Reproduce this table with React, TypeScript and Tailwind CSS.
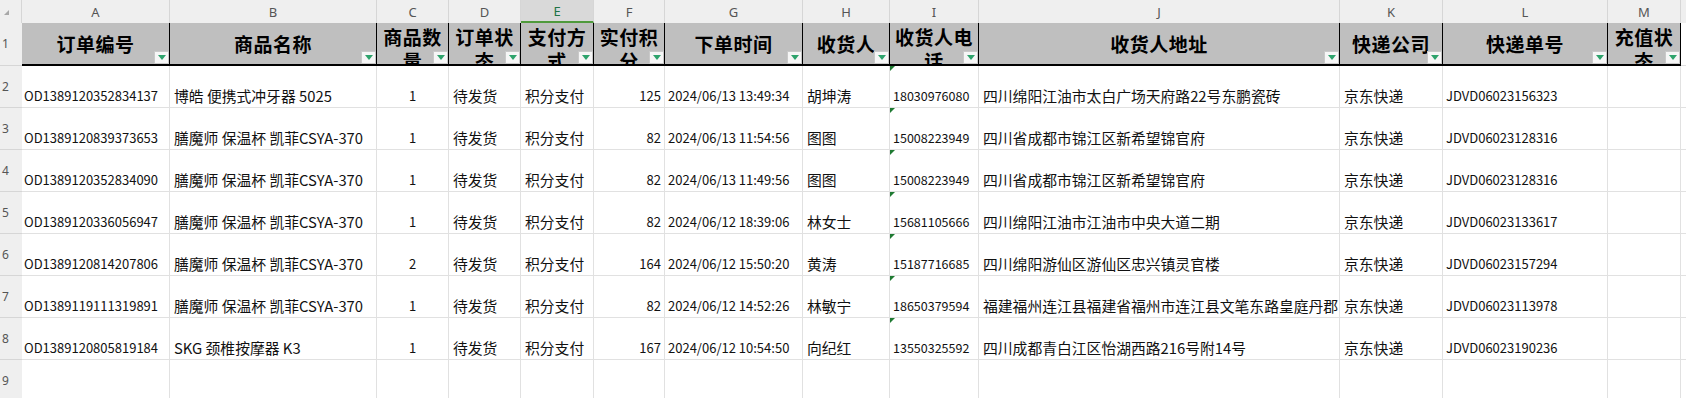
import type { ReactNode } from 'react';

type Col = {
  letter: string;
  head: string[];
  cell: string;
};

const cols: Col[] = [
  { letter: 'A', head: ['订单编号'], cell: 'justify-start pl-[2px] text-[13px]' },
  { letter: 'B', head: ['商品名称'], cell: 'justify-start pl-[4px] text-[14.8px]' },
  { letter: 'C', head: ['商品数', '量'], cell: 'justify-center text-[13px]' },
  { letter: 'D', head: ['订单状', '态'], cell: 'justify-start pl-[4px] text-[14.8px]' },
  { letter: 'E', head: ['支付方', '式'], cell: 'justify-start pl-[4px] text-[14.8px]' },
  { letter: 'F', head: ['实付积', '分'], cell: 'justify-end pr-[3px] text-[13px]' },
  { letter: 'G', head: ['下单时间'], cell: 'justify-start pl-[3px] text-[13px]' },
  { letter: 'H', head: ['收货人'], cell: 'justify-start pl-[4px] text-[14.8px]' },
  { letter: 'I', head: ['收货人电', '话'], cell: 'justify-start pl-[3px] text-[12.5px]' },
  { letter: 'J', head: ['收货人地址'], cell: 'justify-start pl-[4px] text-[14.8px]' },
  { letter: 'K', head: ['快递公司'], cell: 'justify-start pl-[4px] text-[14.8px]' },
  { letter: 'L', head: ['快递单号'], cell: 'justify-start pl-[3px] text-[13px]' },
  { letter: 'M', head: ['充值状', '态'], cell: 'justify-start pl-[4px] text-[14.8px]' },
];

const rows: string[][] = [
  ['OD1389120352834137', '博皓 便携式冲牙器 5025', '1', '待发货', '积分支付', '125', '2024/06/13 13:49:34', '胡坤涛', '18030976080', '四川绵阳江油市太白广场天府路22号东鹏瓷砖', '京东快递', 'JDVD06023156323', ''],
  ['OD1389120839373653', '膳魔师 保温杯 凯菲CSYA-370', '1', '待发货', '积分支付', '82', '2024/06/13 11:54:56', '图图', '15008223949', '四川省成都市锦江区新希望锦官府', '京东快递', 'JDVD06023128316', ''],
  ['OD1389120352834090', '膳魔师 保温杯 凯菲CSYA-370', '1', '待发货', '积分支付', '82', '2024/06/13 11:49:56', '图图', '15008223949', '四川省成都市锦江区新希望锦官府', '京东快递', 'JDVD06023128316', ''],
  ['OD1389120336056947', '膳魔师 保温杯 凯菲CSYA-370', '1', '待发货', '积分支付', '82', '2024/06/12 18:39:06', '林女士', '15681105666', '四川绵阳江油市江油市中央大道二期', '京东快递', 'JDVD06023133617', ''],
  ['OD1389120814207806', '膳魔师 保温杯 凯菲CSYA-370', '2', '待发货', '积分支付', '164', '2024/06/12 15:50:20', '黄涛', '15187716685', '四川绵阳游仙区游仙区忠兴镇灵官楼', '京东快递', 'JDVD06023157294', ''],
  ['OD1389119111319891', '膳魔师 保温杯 凯菲CSYA-370', '1', '待发货', '积分支付', '82', '2024/06/12 14:52:26', '林敏宁', '18650379594', '福建福州连江县福建省福州市连江县文笔东路皇庭丹郡', '京东快递', 'JDVD06023113978', ''],
  ['OD1389120805819184', 'SKG 颈椎按摩器 K3', '1', '待发货', '积分支付', '167', '2024/06/12 10:54:50', '向纪红', '13550325592', '四川成都青白江区怡湖西路216号附14号', '京东快递', 'JDVD06023190236', ''],
];

const FilterButton = () => (
  <div className="absolute bottom-0 right-0 w-[15px] h-[13px] bg-[#f6f6f6] border border-[#c9c9c9] flex items-center justify-center">
    <svg width="8" height="5" viewBox="0 0 8 5">
      <polygon points="0,0 8,0 4,5" fill="#2ea36c" />
    </svg>
  </div>
);

// little green "number stored as text" flag
const TextMark = () => (
  <svg className="absolute top-0 left-0" width="5" height="5" viewBox="0 0 5 5">
    <polygon points="0,0 5,0 0,5" fill="#1f7a32" />
  </svg>
);

const RowNum = ({ children, h }: { children: ReactNode; h: string }) => (
  <div className={`${h} flex items-center pl-[2px] bg-[#efefef] border-b border-[#d6d6d6] text-[12px] text-[#555] font-['Noto_Sans',sans-serif]`}>
    {children}
  </div>
);

export default function App() {
  return (
    <div className="w-[1686px] h-[398px] overflow-hidden bg-white font-['Noto_Sans_CJK_SC',sans-serif] text-[#111]">
      <div className="grid grid-cols-[22px_148px_207px_72px_72px_73px_71px_138px_87px_89px_361px_103px_165px_73px_1fr]">
        {/* column letters */}
        <div className="h-[23px] bg-[#efefef] border-r border-[#d6d6d6] flex items-center pl-[4px] pt-[2px]">
          <svg width="5" height="5" viewBox="0 0 5 5">
            <polygon points="5,0 5,5 0,5" fill="#a8a8a8" />
          </svg>
        </div>
        {cols.map((c) =>
          c.letter === 'E' ? (
            <div
              key={c.letter}
              className="h-[23px] bg-[#d9d9d9] border-r border-[#d6d6d6] border-b-2 border-b-[#4f9a3c] flex items-center justify-center pt-[2px] text-[13px] text-[#217346] font-['Noto_Sans',sans-serif]"
            >
              {c.letter}
            </div>
          ) : (
            <div
              key={c.letter}
              className="h-[23px] bg-[#efefef] border-r border-[#d6d6d6] flex items-center justify-center pt-[2px] text-[13px] text-[#555] font-['Noto_Sans',sans-serif]"
            >
              {c.letter}
            </div>
          )
        )}
        <div className="h-[23px] bg-[#efefef]" />

        {/* header row */}
        <RowNum h="h-[43px]">1</RowNum>
        {cols.map((c) => (
          <div
            key={c.letter}
            className={`relative h-[43px] overflow-hidden bg-[#bfbfbf] border-r border-black border-b-2 border-b-black flex flex-col items-center font-bold text-[19px] tracking-[0.5px] leading-[24px] text-black ${
              c.head.length > 1 ? 'justify-start pt-[2px]' : 'justify-center pt-[1px]'
            }`}
          >
            {c.head.map((l) => (
              <span key={l} className="whitespace-nowrap">{l}</span>
            ))}
            <FilterButton />
          </div>
        ))}
        <div className="h-[43px] border-b border-[#e1e1e1]" />

        {/* data rows */}
        {rows.map((r, i) => (
          <div key={i} className="contents">
            <RowNum h="h-[42px]">{i + 2}</RowNum>
            {cols.map((c, j) => (
              <div
                key={c.letter}
                className={`relative h-[42px] flex items-end overflow-hidden whitespace-nowrap border-r border-b border-[#e1e1e1] pb-[2px] leading-[18px] ${c.cell}`}
              >
                {c.letter === 'I' && <TextMark />}
                {r[j]}
              </div>
            ))}
            <div className="h-[42px] border-b border-[#e1e1e1]" />
          </div>
        ))}

        {/* empty row 9 */}
        <RowNum h="h-[42px]">9</RowNum>
        {cols.map((c) => (
          <div key={c.letter} className="h-[42px] border-r border-b border-[#e1e1e1]" />
        ))}
        <div className="h-[42px]" />
      </div>
    </div>
  );
}
